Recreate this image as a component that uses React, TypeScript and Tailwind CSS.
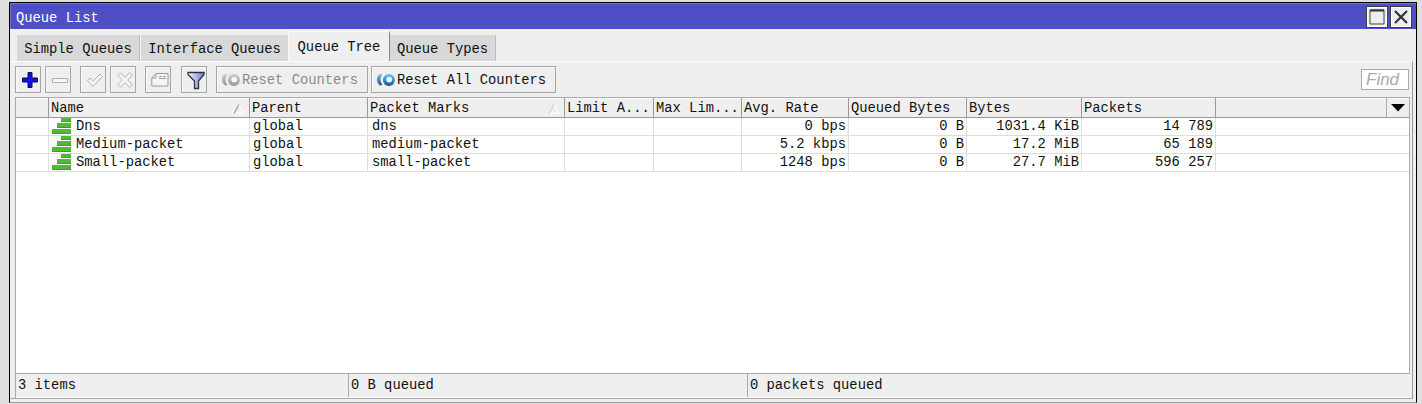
import type { ReactNode } from "react";

type Column = { label: string; width: string; right?: boolean; sort?: "strong" | "faint" };

const columns: Column[] = [
  { label: "", width: "w-[33px]" },
  { label: "Name", width: "w-[201px]", sort: "strong" },
  { label: "Parent", width: "w-[118px]" },
  { label: "Packet Marks", width: "w-[197px]", sort: "faint" },
  { label: "Limit A...", width: "w-[89px]" },
  { label: "Max Lim...", width: "w-[88px]" },
  { label: "Avg. Rate", width: "w-[107px]", right: true },
  { label: "Queued Bytes", width: "w-[118px]", right: true },
  { label: "Bytes", width: "w-[115px]", right: true },
  { label: "Packets", width: "w-[134px]", right: true },
];

const rows = [
  ["", "Dns", "global", "dns", "", "", "0 bps", "0 B", "1031.4 KiB", "14 789"],
  ["", "Medium-packet", "global", "medium-packet", "", "", "5.2 kbps", "0 B", "17.2 MiB", "65 189"],
  ["", "Small-packet", "global", "small-packet", "", "", "1248 bps", "0 B", "27.7 MiB", "596 257"],
];

function IconButton({ className = "", children }: { className?: string; children: ReactNode }) {
  return (
    <button className={`flex h-[27px] w-[26px] shrink-0 items-center justify-center border border-[#a6a6a6] bg-[#efefef] pl-[4px] shadow-[inset_1px_1px_0_#fafafa] ${className}`}>
      {children}
    </button>
  );
}

function ResetIcon({ active = false }: { active?: boolean }) {
  const dark = active ? "#174f9c" : "#999";
  const light = active ? "#62cbff" : "#cdcdcd";
  const id = active ? "reset-on" : "reset-off";
  return (
    <svg width="19" height="14" viewBox="0 0 19 14" className="shrink-0">
      <defs>
        <linearGradient id={id} x1="0" y1="0" x2="0" y2="1">
          <stop offset="0" stopColor={light} />
          <stop offset="1" stopColor={dark} />
        </linearGradient>
      </defs>
      <path d="M4.5 1C0 2.5-.2 9.5 4 12.6L6.4 12C4 8.5 4.1 4.5 6.4 1.3Z" fill={`url(#${id})`} />
      <circle cx="12.9" cy="7" r="6" fill={`url(#${id})`} />
      <circle cx="13.2" cy="6.6" r="2.9" fill="#f5f5f5" />
    </svg>
  );
}

function QueueIcon() {
  return (
    <svg width="19" height="17" viewBox="0 0 19 17" className="mr-[5px] shrink-0">
      <path d="M9 0h10v4H9ZM5 5h14v5H5ZM0 11h19v5H0Z" fill="#52b936" />
      <path d="M9 3h10v1H9ZM5 9h14v1H5ZM0 15h19v1H0Z" fill="#3c9f24" />
    </svg>
  );
}

function SortMark({ kind }: { kind: "strong" | "faint" }) {
  return (
    <svg width="12" height="10" viewBox="0 0 12 10" className="ml-auto mr-[4px] shrink-0">
      <path d="M6 .5L11 9.5H1" fill="none" stroke="#fcfcfc" strokeWidth="1.3" />
      <path d="M1 9.5L6 .5" stroke={kind === "strong" ? "#999" : "#cfcfcf"} strokeWidth="1.2" />
    </svg>
  );
}

export default function App() {
  return (
    <div className="h-[404px] w-[1422px] overflow-hidden bg-[#e0dfde] pl-[9px] pt-[2px] font-['Liberation_Mono',monospace] text-[13.8px] leading-[17px] text-[#111]">
      <div className="flex h-[401px] w-[1408px] flex-col border-x border-t border-b border-x-black border-t-black border-b-[#999] bg-[#efefef]">
        <header className="flex h-[26px] shrink-0 items-center border-l border-t border-[#7474c8] bg-[#4e4fc5] pl-[5px] pr-[4px] text-white">
          <span className="pt-[4px]">Queue List</span>
          <div className="ml-auto flex gap-[2px] pt-px">
            <button className="flex h-[22px] w-[22px] items-center justify-center border border-[#3e3e50] bg-[#eee] shadow-[inset_0_0_0_1px_white]">
              <svg width="16" height="16" viewBox="0 0 16 16">
                <path d="M1 1h14v14H1Z" fill="none" stroke="#444" />
                <path d="M1 1.5h14" stroke="#333" strokeWidth="2" />
              </svg>
            </button>
            <button className="flex h-[22px] w-[22px] items-center justify-center border border-[#3e3e50] bg-[#eee] shadow-[inset_0_0_0_1px_white]">
              <svg width="16" height="16" viewBox="0 0 16 16">
                <path d="M2 2l12 12M14 2L2 14" stroke="#333" strokeWidth="2.2" />
              </svg>
            </button>
          </div>
        </header>

        <nav className="flex h-[32px] shrink-0 items-end pl-[7px]">
          <div className="flex h-[26px] w-[123px] items-center justify-center border-r border-[#bbb] bg-[#d8d8d8] pt-[3px]">Simple Queues</div>
          <div className="flex h-[26px] w-[148px] items-center justify-center border-l border-[#f4f4f4] bg-[#d8d8d8] pt-[3px]">Interface Queues</div>
          <div className="flex h-[30px] w-[102px] items-center justify-center border-l border-r border-t border-l-[#fafafa] border-r-[#888] border-t-[#fafafa] bg-[#efefef] pt-px">Queue Tree</div>
          <div className="flex h-[26px] w-[106px] items-center justify-center border-r border-[#bbb] bg-[#d8d8d8] pt-[3px]">Queue Types</div>
        </nav>

        <main className="mr-[3px] flex h-[338px] shrink-0 flex-col border-b border-r border-t border-b-[#aaa] border-r-[#999] border-t-[#fcfcfc] pl-[5px] pr-[2px]">
          <div className="flex h-[35px] shrink-0 items-start pt-[4px]">
            <IconButton>
              <svg width="18" height="18" viewBox="0 0 18 18">
                <path d="M7 1.5h4V7h5.5v4H11v5.5H7V11H1.5V7H7Z" fill="#1010ed" stroke="#111143" />
              </svg>
            </IconButton>
            <IconButton className="ml-[4px]">
              <svg width="18" height="8" viewBox="0 0 18 8"><path d="M1.5 2.5h15v4h-15Z" fill="#f6f6f6" stroke="#b0b0b0" /></svg>
            </IconButton>
            <IconButton className="ml-[9px]">
              <svg width="18" height="18" viewBox="0 0 18 18"><path d="M1.5 9.5L4 7l3 3 7-7 2.5 2.5L7 15.5Z" fill="#f4f4f4" stroke="#b0b0b0" /></svg>
            </IconButton>
            <IconButton className="ml-[4px]">
              <svg width="18" height="18" viewBox="0 0 18 18"><path d="M4.5 1.8L9 6.3l4.5-4.5 2.7 2.7L11.7 9l4.5 4.5-2.7 2.7L9 11.7l-4.5 4.5-2.7-2.7L6.3 9 1.8 4.5Z" fill="#f4f4f4" stroke="#b0b0b0" /></svg>
            </IconButton>
            <IconButton className="ml-[9px]">
              <svg width="18" height="16" viewBox="0 0 18 16">
                <path d="M5 1.5h12v12.5H.8V6Z" fill="#f5f5f5" stroke="#999" />
                <path d="M.8 6H5V1.5M8 4.5h3m1 0h3M8 6.5h7" fill="none" stroke="#a0a0a0" />
              </svg>
            </IconButton>
            <IconButton className="ml-[10px]">
              <svg width="18" height="20" viewBox="0 0 18 20">
                <defs><linearGradient id="funnel"><stop stopColor="#f5f8ff" /><stop offset="1" stopColor="#6982c9" /></linearGradient></defs>
                <path d="M1 2.5h16v2L11.5 11v7.5h-4V11L1 4.5Z" fill="url(#funnel)" stroke="#303044" strokeWidth="1.3" />
              </svg>
            </IconButton>
            <button className="ml-[9px] flex h-[27px] w-[152px] items-center border border-[#a6a6a6] pl-[4px] text-[#8b8b8b] shadow-[inset_1px_1px_0_#fafafa]">
              <ResetIcon /><span className="pl-[2px] pt-[2px]">Reset Counters</span>
            </button>
            <button className="ml-[3px] flex h-[27px] w-[185px] items-center border border-[#a6a6a6] pl-[4px] shadow-[inset_1px_1px_0_#fafafa]">
              <ResetIcon active /><span className="whitespace-nowrap pl-[2px] pt-[2px]">Reset All Counters</span>
            </button>
            <div className="ml-auto mr-px mt-[3px] flex h-[21px] w-[48px] items-center border border-[#aaa] bg-white pl-[4px] font-['Liberation_Sans',sans-serif] text-[17px] italic text-[#aaa]">Find</div>
          </div>

          <div className="flex h-[302px] shrink-0 flex-col border-l border-t border-[#aaa]">
            <div className="flex h-[276px] shrink-0 flex-col border-b border-r border-[#aaa] bg-white">
              <div className="flex h-[20px] shrink-0 border-b border-[#999] bg-[#efefef] shadow-[inset_0_1px_0_#fafafa]">
                {columns.map((column, index) => (
                  <div key={index} className={`flex shrink-0 items-center whitespace-nowrap border-r border-[#999] pl-[2px] pt-[2px] ${column.width}`}>
                    <span>{column.label}</span>
                    {column.sort && <SortMark kind={column.sort} />}
                  </div>
                ))}
                <div className="ml-auto flex w-[23px] items-center justify-center border-l border-[#aaa]">
                  <svg width="16" height="8" viewBox="0 0 16 8"><path d="M1 0h14L8 7.5Z" fill="black" /></svg>
                </div>
              </div>
              {rows.map((row) => (
                <div key={row[1]} className="flex h-[18px] shrink-0 border-b border-[#ddd]">
                  {row.map((value, index) => (
                    <div key={index} className={`flex shrink-0 items-center whitespace-nowrap border-r border-[#ddd] ${index === 3 ? "pl-[4px]" : "pl-[3px]"} ${columns[index].width} ${columns[index].right ? "justify-end pr-[2px]" : ""}`}>
                      {index === 1 && <QueueIcon />}
                      {value}
                    </div>
                  ))}
                </div>
              ))}
            </div>
            <footer className="flex h-[24px] shrink-0 items-stretch border-b border-[#f8f8f8] leading-[24px]">
              <span className="w-[332px] pl-[2px]">3 items</span>
              <span className="w-[399px] border-l border-[#aaa] pl-[2px]">0 B queued</span>
              <span className="border-l border-[#aaa] pl-[2px]">0 packets queued</span>
            </footer>
          </div>
        </main>
      </div>
    </div>
  );
}
